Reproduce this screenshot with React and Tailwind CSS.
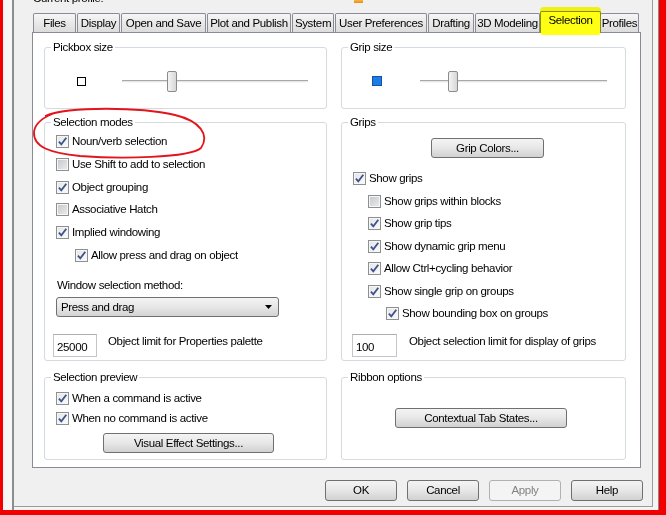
import React from "react";

function CB({ checked }) {
  return (
    <span
      className={
        (checked
          ? "bg-linear-to-br from-[#e2e5e9] to-[#fbfbfb]"
          : "bg-linear-to-br from-[#c4c7cc] to-[#ededed]") +
        " w-[13px] h-[13px] shrink-0 border border-[#8e8f8f] shadow-[inset_0_0_0_1px_#f6f6f6] flex items-center justify-center"
      }
    >
      {checked && (
        <svg width="11" height="11" viewBox="0 0 11 11">
          <path d="M1.9 5.6 L4.3 8.3 L9.3 1.7" fill="none" stroke="#3f5289" strokeWidth="1.8" />
        </svg>
      )}
    </span>
  );
}

function Item({ checked, label, cls }) {
  return (
    <div className={"flex items-center gap-[3px] " + cls}>
      <CB checked={checked} />
      <span className="whitespace-nowrap">{label}</span>
    </div>
  );
}

function Btn({ cls, children, disabled }) {
  return (
    <div
      className={
        cls +
        " rounded-[3px] border flex items-center justify-center whitespace-nowrap " +
        (disabled
          ? "border-[#adb2b5] bg-[#f4f4f4] text-[#838383]"
          : "border-[#707070] bg-linear-to-b from-[#f4f4f4] via-[#e7e7e7] to-[#d1d1d1]")
      }
    >
      {children}
    </div>
  );
}

function Group({ title, cls, children }) {
  return (
    <div className={"border border-[#d5dadf] rounded-[3px] flex flex-col " + cls}>
      <div className="-mt-[7px] ml-[6px] px-[2px] w-fit bg-white h-[13px] leading-[13px] whitespace-nowrap">
        {title}
      </div>
      {children}
    </div>
  );
}

function Slider({ w, thumb }) {
  return (
    <div className={"relative h-[21px] flex items-center " + w}>
      <div className="w-full h-[3px] border-t border-[#a8a8a8] bg-[#e6e6e6] border-b border-b-[#f8f8f8]" />
      <div
        className="absolute top-0 w-[10px] h-[21px] rounded-[2px] border border-[#8b8b8b] bg-linear-to-r from-[#f4f4f4] to-[#d7d7d7]"
        style={{ left: thumb }}
      />
    </div>
  );
}

function Input({ value, cls }) {
  return (
    <div
      className={
        "h-[23px] bg-white border border-[#c3c5c9] border-t-[#abadb3] flex items-center pl-[3px] pt-[3px] " + cls
      }
    >
      {value}
    </div>
  );
}

const tabs = [
  ["Files", "w-[43px]"],
  ["Display", "w-[43px]"],
  ["Open and Save", "w-[85px]"],
  ["Plot and Publish", "w-[84px]"],
  ["System", "w-[42px]"],
  ["User Preferences", "w-[92px]"],
  ["Drafting", "w-[46px]"],
  ["3D Modeling", "w-[65px]"],
];

export default function App() {
  return (
    <div className="relative w-[666px] h-[515px] bg-[#f20000] pl-[3px] pr-[7px] pb-[5px] flex text-[11.5px] leading-[13px] tracking-[-0.35px] text-black font-['Liberation_Sans',Arial,sans-serif] overflow-hidden">
      {/* left strip */}
      <div className="w-[11px] bg-[#f7f7f7] border-r-2 border-[#8d8d8d]" />
      {/* window frame */}
      <div className="flex-1 flex flex-col bg-[#f5f5f5] pr-[5px] pb-[3px] border-r border-[#8a8a8a]">
        <div className="flex-1 bg-[#f0f0f0] border-r border-b border-[#9c9c9c] flex flex-col">
          {/* cut-off top line */}
          <div className="h-[11px] overflow-hidden flex items-start">
            <div className="-mt-[8px] ml-[19px] whitespace-nowrap">Current profile:</div>
            <div className="ml-[251px] w-[9px] h-[3px] bg-linear-to-b from-[#f6b73c] to-[#e98a14]" />
          </div>
          {/* tabs */}
          <div className="h-[21px] flex items-end gap-[1px] ml-[19px]">
            {tabs.map(([t, w]) => (
              <div
                key={t}
                className={
                  w +
                  " h-[19px] border border-b-0 border-[#898c95] rounded-t-[2px] bg-linear-to-b from-[#f6f6f6] to-[#dcdcdc] flex items-center justify-center whitespace-nowrap"
                }
              >
                {t}
              </div>
            ))}
            <div className="w-[61px] h-[22px] -mb-[1px] -ml-[1px] -mr-[2px] relative z-10 bg-white border border-b-0 border-[#898c95] rounded-t-[2px] flex items-center justify-center pb-[4px]">
              Selection
            </div>
            <div className="w-[39px] h-[19px] border border-b-0 border-[#898c95] rounded-t-[2px] bg-linear-to-b from-[#f6f6f6] to-[#dcdcdc] flex items-center justify-center">
              Profiles
            </div>
          </div>
          {/* panel */}
          <div className="ml-[18px] w-[609px] h-[436px] bg-white border border-[#898c95] pt-[14px] pl-[11px] flex flex-col">
            {/* row 1 */}
            <div className="flex gap-[14px]">
              <Group title="Pickbox size" cls="w-[283px] h-[62px]">
                <div className="flex-1 flex items-center">
                  <div className="ml-[32px] w-[9px] h-[9px] border border-black" />
                  <div className="ml-[36px]">
                    <Slider w="w-[186px]" thumb={45} />
                  </div>
                </div>
              </Group>
              <Group title="Grip size" cls="w-[285px] h-[62px]">
                <div className="flex-1 flex items-center">
                  <div className="ml-[30px] w-[10px] h-[10px] bg-[#1b7de9] border border-[#16539e]" />
                  <div className="ml-[38px]">
                    <Slider w="w-[187px]" thumb={28} />
                  </div>
                </div>
              </Group>
            </div>
            {/* row 2 */}
            <div className="flex gap-[14px] mt-[13px]">
              <Group title="Selection modes" cls="w-[283px] h-[239px]">
                <div className="mt-[1.5px] flex flex-col">
                  <Item checked label="Noun/verb selection" cls="h-[22.7px] pl-[11px]" />
                  <Item label="Use Shift to add to selection" cls="h-[22.7px] pl-[11px]" />
                  <Item checked label="Object grouping" cls="h-[22.7px] pl-[11px]" />
                  <Item label="Associative Hatch" cls="h-[22.7px] pl-[11px]" />
                  <Item checked label="Implied windowing" cls="h-[22.7px] pl-[11px]" />
                  <Item checked label="Allow press and drag on object" cls="h-[22.7px] pl-[30px]" />
                </div>
                <div className="mt-[12px] pl-[12px]">Window selection method:</div>
                <div className="mt-[5.5px] ml-[11px] w-[223px] h-[20px] rounded-[3px] border border-[#707070] bg-linear-to-b from-[#f4f4f4] via-[#e7e7e7] to-[#d3d3d3] flex items-center justify-between pl-[4px] pr-[6px]">
                  <span>Press and drag</span>
                  <svg width="7" height="4" viewBox="0 0 7 4">
                    <path d="M0 0H7L3.5 4Z" fill="#000" />
                  </svg>
                </div>
                <div className="mt-[17px] flex items-start">
                  <Input value="25000" cls="ml-[8px] w-[44px]" />
                  <div className="ml-[11px] mt-[1px] whitespace-nowrap">Object limit for Properties palette</div>
                </div>
              </Group>
              <Group title="Grips" cls="w-[285px] h-[239px]">
                <Btn cls="mt-[9px] ml-[89px] w-[113px] h-[20px]">Grip Colors...</Btn>
                <div className="mt-[9.25px] flex flex-col">
                  <Item checked label="Show grips" cls="h-[22.5px] pl-[11px]" />
                  <Item label="Show grips within blocks" cls="h-[22.5px] pl-[26px]" />
                  <Item checked label="Show grip tips" cls="h-[22.5px] pl-[26px]" />
                  <Item checked label="Show dynamic grip menu" cls="h-[22.5px] pl-[26px]" />
                  <Item checked label="Allow Ctrl+cycling behavior" cls="h-[22.5px] pl-[26px]" />
                  <Item checked label="Show single grip on groups" cls="h-[22.5px] pl-[26px]" />
                  <Item checked label="Show bounding box on groups" cls="h-[22.5px] pl-[44px]" />
                </div>
                <div className="mt-[9.25px] flex items-start">
                  <Input value="100" cls="ml-[10px] w-[45px]" />
                  <div className="ml-[12px] mt-[1px] whitespace-nowrap">Object selection limit for display of grips</div>
                </div>
              </Group>
            </div>
            {/* row 3 */}
            <div className="flex gap-[14px] mt-[16px]">
              <Group title="Selection preview" cls="w-[283px] h-[83px]">
                <div className="mt-[4.5px] flex flex-col">
                  <Item checked label="When a command is active" cls="h-[20px] pl-[11px]" />
                  <Item checked label="When no command is active" cls="h-[20px] pl-[11px]" />
                </div>
                <Btn cls="mt-[4.5px] ml-[58px] w-[171px] h-[20px]">Visual Effect Settings...</Btn>
              </Group>
              <Group title="Ribbon options" cls="w-[285px] h-[83px]">
                <Btn cls="mt-[24px] ml-[53px] w-[172px] h-[20px]">Contextual Tab States...</Btn>
              </Group>
            </div>
          </div>
          {/* bottom buttons */}
          <div className="mt-[12px] flex justify-end gap-[10px] pr-[9px]">
            <Btn cls="w-[72px] h-[21px]">OK</Btn>
            <Btn cls="w-[72px] h-[21px]">Cancel</Btn>
            <Btn cls="w-[72px] h-[21px]" disabled>
              Apply
            </Btn>
            <Btn cls="w-[72px] h-[21px]">Help</Btn>
          </div>
        </div>
      </div>

      {/* yellow highlighter over the Selection tab */}
      <div className="absolute left-[540px] top-[7px] w-[61px] h-[28px] bg-[#ffff14] mix-blend-multiply rounded-[4px] z-20 pointer-events-none" />

      {/* red hand-drawn ellipse */}
      <svg className="absolute left-0 top-0 z-20 pointer-events-none" width="666" height="515" viewBox="0 0 666 515">
        <path
          d="M45 116 C70 106, 140 107, 175 115 C200 121, 210 135, 201 148 C190 158, 120 159, 80 156 C50 153, 33 147, 34 132 C35 123, 42 117, 58 112"
          fill="none"
          stroke="#e3141b"
          strokeWidth="1.8"
        />
      </svg>
    </div>
  );
}
